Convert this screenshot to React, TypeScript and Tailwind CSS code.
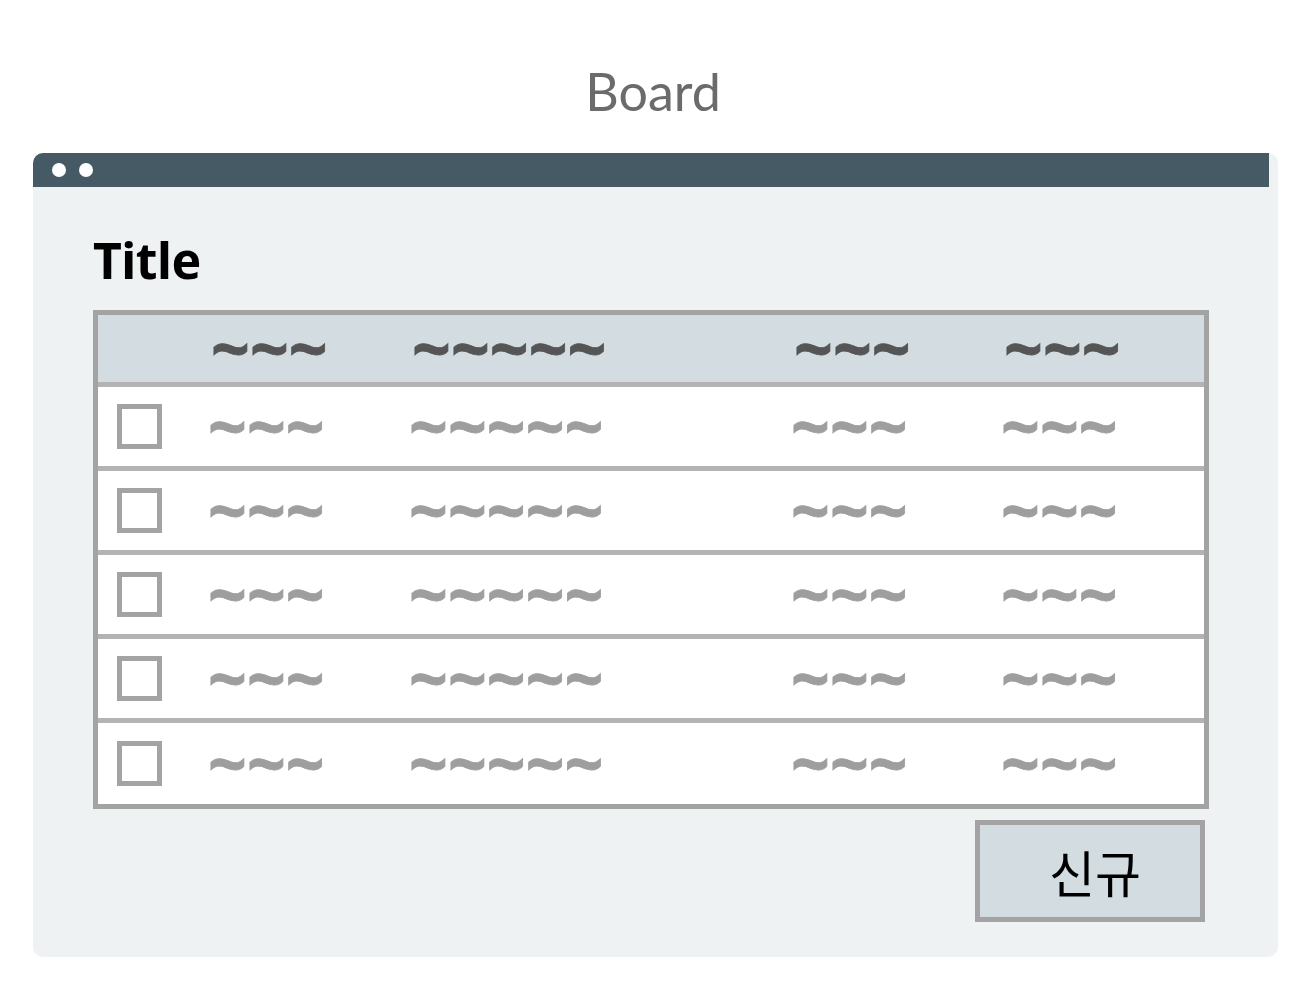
import React from "react";

const cols = [
  { len: 3 },
  { len: 5 },
  { len: 3 },
  { len: 3 },
];

function Tildes({ n, head }: { n: number; head?: boolean }) {
  return (
    <span
      className={
        "inline-block font-['Noto_Sans',sans-serif] font-bold text-[68px] leading-[30px] h-[30px] whitespace-nowrap -translate-y-[2px] " +
        (head
          ? "text-[#555555] [-webkit-text-stroke:0.8px_#555555]"
          : "text-[#9e9e9e] [-webkit-text-stroke:0.8px_#9e9e9e]")
      }
    >
      {"~".repeat(n)}
    </span>
  );
}

function Row({ last }: { last: boolean }) {
  return (
    <div
      className={
        "grid grid-cols-[110px_201px_382px_210px_1fr] items-center bg-white " +
        (last ? "h-[81px]" : "h-[84px] border-b-[5px] border-[#b3b3b3]")
      }
    >
      <div className="pl-[19px] flex items-center">
        <div className="w-[45px] h-[45px] border-[5px] border-[#a3a3a3] bg-white" />
      </div>
      {cols.map((c, i) => (
        <div key={i} className="flex items-center h-full">
          <Tildes n={c.len} />
        </div>
      ))}
    </div>
  );
}

export default function App() {
  return (
    <div className="w-[1306px] h-[985px] bg-white relative font-['Noto_Sans',sans-serif]">
      <div className="h-[153px] flex justify-center pt-[65px]">
        <h1 className="font-['Lato',sans-serif] text-[52px] leading-none text-[#6b6b6b] h-fit">
          Board
        </h1>
      </div>

      <div className="ml-[33px] w-[1245px] h-[804px] bg-[#eef2f3] rounded-[10px] flex flex-col">
        <div className="h-[34px] mr-[9px] bg-[#455a64] rounded-tl-[10px] flex items-center gap-[13px] pl-[19px]">
          <span className="w-[14px] h-[14px] rounded-full bg-white" />
          <span className="w-[14px] h-[14px] rounded-full bg-white" />
        </div>

        <div className="pl-[60px] pt-[48px] flex flex-col">
          <h2 className="text-[50px] leading-[50px] font-bold text-black tracking-[-0.5px]">
            Title
          </h2>

          <div className="mt-[25px] w-[1116px] border-[5px] border-[#a3a3a3] flex flex-col">
            <div className="grid grid-cols-[110px_201px_382px_210px_1fr] items-center h-[72px] bg-[#d3dce1] border-b-[5px] border-[#b3b3b3]">
              <div />
              {cols.map((c, i) => (
                <div key={i} className="flex items-center h-full pl-[3px]">
                  <Tildes n={c.len} head />
                </div>
              ))}
            </div>
            {[0, 1, 2, 3, 4].map((i) => (
              <Row key={i} last={i === 4} />
            ))}
          </div>

          <div className="w-[1116px] flex justify-end mt-[11px] pr-[4px]">
            <button className="w-[230px] h-[102px] border-[5px] border-[#a3a3a3] bg-[#d3dce1] flex items-center justify-center pl-[10px] font-['Noto_Sans_CJK_KR',sans-serif] text-[50px] text-black leading-none">
              신규
            </button>
          </div>
        </div>
      </div>
    </div>
  );
}
